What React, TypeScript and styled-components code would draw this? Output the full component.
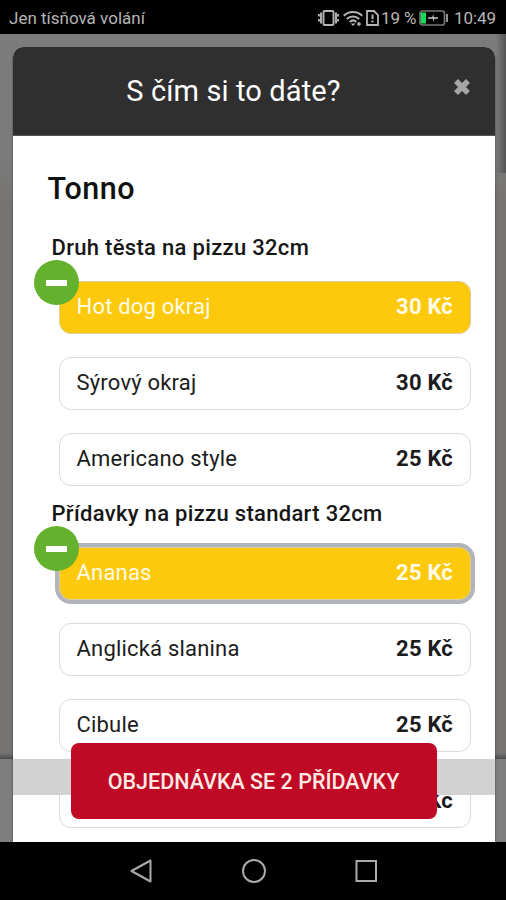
import React from "react";
import styled, { createGlobalStyle } from "styled-components";

const GlobalStyle = createGlobalStyle`
  * { box-sizing: border-box; }
  html, body { margin: 0; padding: 0; }
  body { font-family: Roboto, "Noto Sans", sans-serif; background: #000; }
`;

const Screen = styled.div`
  width: 506px;
  height: 900px;
  display: flex;
  flex-direction: column;
  overflow: hidden;
  background: #000;
`;

const StatusBar = styled.header`
  flex: none;
  height: 34px;
  padding: 2px 10px 0 9px;
  display: flex;
  align-items: center;
  justify-content: space-between;
  color: #b5b5b5;
  font-size: 17px;
  line-height: 20px;
  white-space: nowrap;
`;

const Carrier = styled.span`
  letter-spacing: 0;
`;

const StatusIcons = styled.div`
  display: flex;
  align-items: center;
  svg { display: block; flex: none; }
`;

const WifiSlot = styled.span`
  margin: 0 3px 0 4px;
`;

const Percent = styled.span`
  width: 38px;
  margin-left: 2px;
  letter-spacing: -0.1px;
`;

const Clock = styled.span`
  width: 42px;
  margin-left: 6px;
  letter-spacing: -0.1px;
`;

const Backdrop = styled.main`
  position: relative;
  flex: none;
  height: 808px;
  padding: 12.5px 11.5px 0 12.5px;
  overflow: hidden;
  background:
    linear-gradient(90deg, transparent, #565656) 496px 0 / 10px 139px no-repeat,
    linear-gradient(#767472, #4a4a4a) 0 719px / 506px 6px no-repeat,
    linear-gradient(#7e7e7e, #7e7e7e) 0 725px / 506px 83px no-repeat,
    linear-gradient(#7b7b7b 0, #7b7b7b 120px, #767472 170px);
`;

const Modal = styled.section`
  height: 830px;
  border-radius: 10px 10px 0 0;
  background: #fff;
  box-shadow: 0 2px 2px 0 rgba(0, 0, 0, 0.6);
  overflow: hidden;
`;

const ModalHeader = styled.div`
  height: 89px;
  display: grid;
  grid-template-columns: 52px 1fr 62px;
  align-items: center;
  background: #2f2f2f;
  border-bottom: 1px solid #555;
`;

const Title = styled.h1`
  grid-column: 2;
  margin: 1px 0 0;
  padding-right: 30px;
  color: #fff;
  font-size: 29px;
  font-weight: 400;
  line-height: 34px;
  letter-spacing: 0.12px;
  text-align: center;
  white-space: nowrap;
`;

const CloseButton = styled.button`
  width: 20px;
  height: 20px;
  margin: 0 0 7px 19.5px;
  padding: 0;
  border: 0;
  background: none;
  svg { display: block; }
`;

const ModalBody = styled.div`
  padding: 35px 24px 0 35px;
`;

const DishName = styled.h2`
  margin: 0;
  height: 36px;
  color: #111;
  font-size: 30.5px;
  font-weight: 500;
  line-height: 36px;
  letter-spacing: 0.5px;
`;

const GroupTitle = styled.h3<{ $first?: boolean }>`
  margin: ${(p) => (p.$first ? "27px" : "14px")} 0 0 4px;
  height: 28px;
  color: #161616;
  font-size: 22px;
  font-weight: 500;
  line-height: 28px;
  letter-spacing: 0.31px;
  white-space: nowrap;
`;

const OptionList = styled.div`
  display: flex;
  flex-direction: column;
  gap: 23px;
  padding: 19px 0 0 11px;
`;

const Option = styled.div<{ $selected?: boolean; $focused?: boolean }>`
  position: relative;
  height: 53px;
  padding: 0 16.5px 0 17px;
  display: flex;
  align-items: center;
  justify-content: space-between;
  border: 1px solid ${(p) => (p.$selected ? "#d9cf9d" : "#dadada")};
  border-radius: 12px;
  background: ${(p) => (p.$selected ? "#fcc90d" : "#fff")};
  box-shadow: ${(p) => (p.$focused ? "0 0 0 4px #b1b5bb" : "none")};
  color: ${(p) => (p.$selected ? "#fffbe6" : "#1c1c1c")};
  font-size: 22px;
  line-height: 28px;
  letter-spacing: 0.2px;
`;

const Price = styled.span`
  font-weight: 700;
`;

const RemoveBadge = styled.span`
  position: absolute;
  left: -26px;
  top: -22px;
  width: 45px;
  height: 45px;
  border-radius: 50%;
  display: grid;
  place-items: center;
  background: #63b12d;

  &::after {
    content: "";
    width: 21px;
    height: 6px;
    margin-top: 2px;
    background: #fff;
  }
`;

const FooterStrip = styled.div`
  position: absolute;
  left: 13px;
  right: 11px;
  top: 725px;
  height: 36px;
  background: #d2d2d2;
`;

const OrderButton = styled.button`
  position: absolute;
  left: 70.5px;
  top: 709px;
  width: 366px;
  height: 75.5px;
  padding: 2px 0 0;
  border: 0;
  border-radius: 8px;
  background: #c00a25;
  color: #ffe9e4;
  font-family: inherit;
  font-size: 21.5px;
  font-weight: 500;
  white-space: nowrap;
`;

const NavBar = styled.nav`
  flex: 1;
  padding: 0 129px 0 130px;
  display: flex;
  align-items: center;
  justify-content: space-between;
  svg { display: block; }
`;

function VibrateIcon() {
  return (
    <svg width="21" height="18" viewBox="0 0 21 18" fill="none" stroke="#b5b5b5" strokeWidth="1.9">
      <rect x="5.5" y="2" width="10" height="14" rx="1" />
      <path d="M3 3.5v11M18 3.5v11M.9 5v2.5M.9 10v2.5M20.1 5v2.5M20.1 10v2.5" />
    </svg>
  );
}

function WifiIcon() {
  return (
    <svg width="20" height="17" viewBox="0 0 20 17" fill="none" stroke="#b5b5b5" strokeWidth="2">
      <path d="M.8 5.8c5-5 13.4-5 18.4 0M3.8 9c3.5-3.5 8.9-3.5 12.4 0M6.7 12c2-2 4.6-2 6.6 0" />
      <path d="m10 16-2.3-2.5h4.6z" fill="#b5b5b5" stroke="none" />
      <path d="M16 12v4M14 14h4" strokeWidth="1.5" />
    </svg>
  );
}

function SimAlertIcon() {
  return (
    <svg width="13" height="16" viewBox="0 0 13 16" fill="none" stroke="#b5b5b5" strokeWidth="1.8">
      <path d="M1 1h7l4 4v10H1z" />
      <path d="M6.5 4.5V9M6.5 10.5v2" strokeWidth="2" />
    </svg>
  );
}

function BatteryIcon() {
  return (
    <svg width="29" height="16" viewBox="0 0 29 16" fill="none">
      <rect x="1" y="1" width="24.5" height="14" rx="2.5" stroke="#777" strokeWidth="1.7" />
      <rect x="2" y="2.5" width="5" height="11" fill="#12dc5b" />
      <path d="M9 7.300h4l1.500-3.300v3.300H19v1.400h-3.500L14 12V8.700H9z" fill="#c5c5c5" />
      <path d="M28 4v8" stroke="#aaa" strokeWidth="1.7" />
    </svg>
  );
}

type OptionItem = { name: string; price: string; selected?: boolean; focused?: boolean };

const doughs: OptionItem[] = [
  { name: "Hot dog okraj", price: "30 Kč", selected: true },
  { name: "Sýrový okraj", price: "30 Kč" },
  { name: "Americano style", price: "25 Kč" },
];

const toppings: OptionItem[] = [
  { name: "Ananas", price: "25 Kč", selected: true, focused: true },
  { name: "Anglická slanina", price: "25 Kč" },
  { name: "Cibule", price: "25 Kč" },
  { name: "", price: "25 Kč" },
];

function Options({ items }: { items: OptionItem[] }) {
  return (
    <OptionList>
      {items.map((item, i) => (
        <Option key={i} $selected={item.selected} $focused={item.focused}>
          <span>{item.name}</span>
          <Price>{item.price}</Price>
          {item.selected && <RemoveBadge />}
        </Option>
      ))}
    </OptionList>
  );
}

export default function App() {
  return (
    <Screen>
      <GlobalStyle />
      <StatusBar>
        <Carrier>Jen tísňová volání</Carrier>
        <StatusIcons>
          <VibrateIcon />
          <WifiSlot><WifiIcon /></WifiSlot>
          <SimAlertIcon />
          <Percent>19 %</Percent>
          <BatteryIcon />
          <Clock>10:49</Clock>
        </StatusIcons>
      </StatusBar>
      <Backdrop>
        <Modal>
          <ModalHeader>
            <Title>S čím si to dáte?</Title>
            <CloseButton aria-label="Zavřít">
              <svg width="20" height="20" viewBox="0 0 20 20">
                <path d="M4 4l12 12M16 4L4 16" stroke="#a5a5a5" strokeWidth="5.6" />
              </svg>
            </CloseButton>
          </ModalHeader>
          <ModalBody>
            <DishName>Tonno</DishName>
            <GroupTitle $first>Druh těsta na pizzu 32cm</GroupTitle>
            <Options items={doughs} />
            <GroupTitle>Přídavky na pizzu standart 32cm</GroupTitle>
            <Options items={toppings} />
          </ModalBody>
        </Modal>
        <FooterStrip />
        <OrderButton>OBJEDNÁVKA SE 2 PŘÍDAVKY</OrderButton>
      </Backdrop>
      <NavBar>
        <svg width="22" height="24" viewBox="0 0 22 24" fill="none" stroke="#aaa" strokeWidth="2">
          <path d="M20.5 1.5v21L1.5 12z" strokeLinejoin="round" />
        </svg>
        <svg width="26" height="26" viewBox="0 0 26 26" fill="none" stroke="#aaa" strokeWidth="2">
          <circle cx="13" cy="13" r="11" />
        </svg>
        <svg width="22" height="22" viewBox="0 0 22 22" fill="none" stroke="#aaa" strokeWidth="2">
          <rect x="1.5" y="1" width="19.5" height="20" />
        </svg>
      </NavBar>
    </Screen>
  );
}
